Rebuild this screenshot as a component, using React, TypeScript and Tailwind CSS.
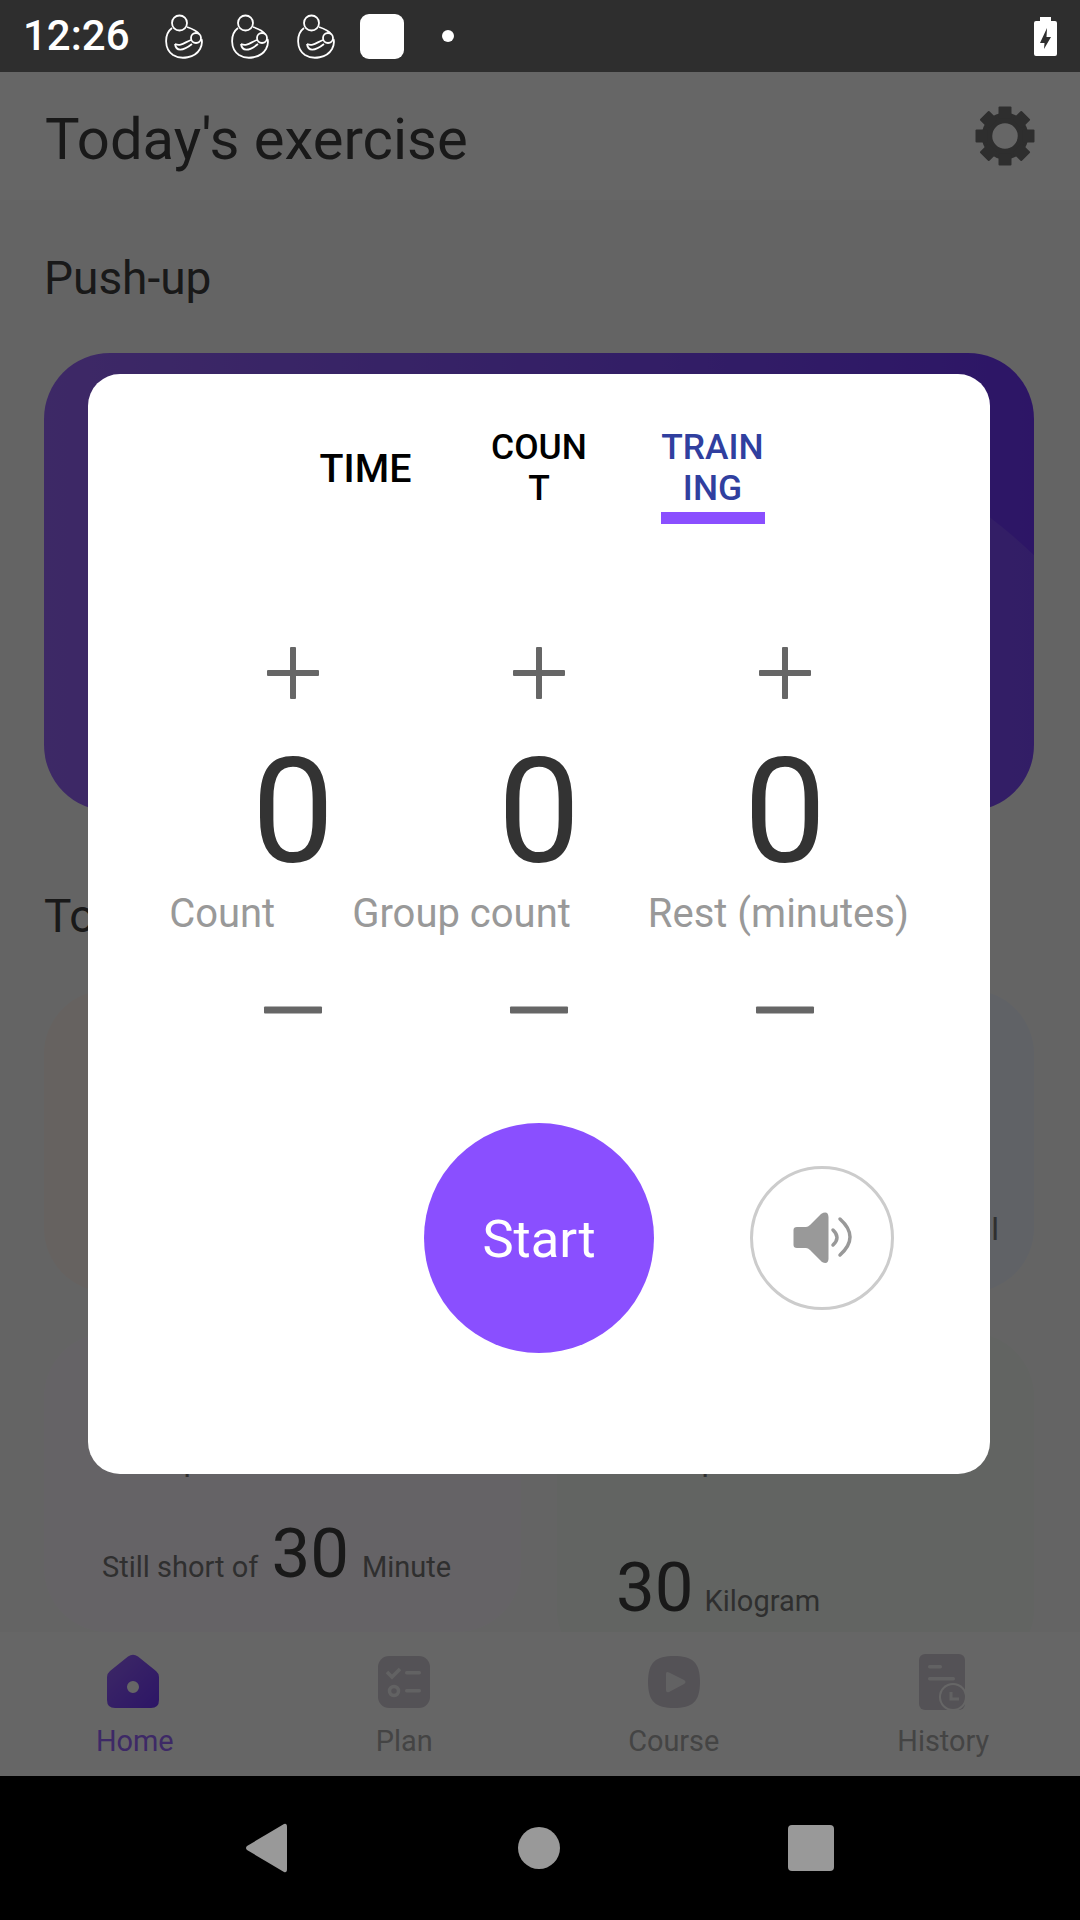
const MotherIcon = () => (
  <svg width="38" height="45" viewBox="0 0 38 45" fill="none" stroke="#fff" strokeWidth="1.8">
    <circle cx="14.5" cy="9" r="7.5" />
    <circle cx="31" cy="24" r="5" />
    <path d="M7 14 C-1 20 -1 35 8 41 C16 46 30 44 35 35 C37 31 37.5 28 36.5 25" />
    <path d="M22 13 C28 15 32 17 34 20" />
    <path d="M10 30 C11 37 17 38 27 30" />
    <path d="M10 30 C16 33 20 28 26 26" />
  </svg>
);

const Gear = () => (
  <svg width="60" height="60" viewBox="0 0 60 60" fill="#737373">
    <circle cx="30" cy="30" r="18" fill="none" stroke="#737373" strokeWidth="10.5" />
    {[0, 45, 90, 135, 180, 225, 270, 315].map((a) => (
      <rect key={a} x="23.5" y="0.5" width="13" height="12" rx="1" transform={`rotate(${a} 30 30)`} />
    ))}
  </svg>
);

const Plus = () => (
  <svg width="54" height="54" viewBox="0 0 54 54" fill="#666">
    <rect x="1" y="24" width="52" height="6" rx="1" />
    <rect x="24" y="1" width="6" height="52" rx="1" />
  </svg>
);

const Minus = () => (
  <svg width="60" height="8" viewBox="0 0 60 8" fill="#666">
    <rect x="1" y="0.5" width="58" height="7" rx="1" />
  </svg>
);

const Speaker = () => (
  <svg className="ml-[2px]" width="60" height="52" viewBox="0 0 60 52" fill="none">
    <path d="M0.5 18 Q0.5 15 4 15 H13 Q15 15 17 13 L28 2 Q35 -2 35.5 5 V47 Q35 53 29 50 L17 38 Q15 36 13 36 H4 Q0.5 36 0.5 33 Z" fill="#999" />
    <path d="M40 18 Q48 25.5 40 33" stroke="#999" strokeWidth="3.5" strokeLinecap="round" />
    <path d="M47 7 Q67 25 47 43" stroke="#999" strokeWidth="3.5" strokeLinecap="round" />
  </svg>
);

const HomeIcon = () => (
  <svg className="-ml-[3px]" width="52" height="54" viewBox="0 0 52 54">
    <defs>
      <linearGradient id="homeGrad" x1="0" y1="0" x2="1" y2="1">
        <stop offset="0" stopColor="#9a66ff" />
        <stop offset="1" stopColor="#7036ff" />
      </linearGradient>
    </defs>
    <path fillRule="evenodd" d="M21 2.5 Q26 -1 31 2.5 L49 17 Q52 19.5 52 23 V46 Q52 54 44 54 H8 Q0 54 0 46 V23 Q0 19.5 3 17 Z M26 27 A6 6 0 1 0 26 39 A6 6 0 1 0 26 27 Z" fill="url(#homeGrad)" />
  </svg>
);

const PlanIcon = () => (
  <svg width="52" height="52" viewBox="0 0 52 52">
    <rect width="52" height="52" rx="11" fill="#d2cdd7" />
    <path d="M9 16 L14 21 L22 13" fill="none" stroke="#fff" strokeWidth="3.5" opacity="0.8" />
    <rect x="27" y="15" width="16" height="3.5" rx="1.7" fill="#fff" opacity="0.8" />
    <circle cx="16" cy="35" r="4.5" fill="none" stroke="#fff" strokeWidth="3.5" opacity="0.8" />
    <rect x="27" y="33" width="16" height="3.5" rx="1.7" fill="#fff" opacity="0.8" />
  </svg>
);

const CourseIcon = () => (
  <svg width="52" height="52" viewBox="0 0 52 52">
    <path d="M26 0 C44 0 52 6 52 26 C52 46 44 52 26 52 C8 52 0 46 0 26 C0 6 8 0 26 0 Z" fill="#d2cdd7" />
    <path d="M18 18 Q18 15 21 16.5 L36 24 Q39 26 36 28 L21 36 Q18 37 18 34 Z" fill="#fff" opacity="0.8" />
  </svg>
);

const HistoryIcon = () => (
  <svg className="-mb-[3px]" width="48" height="57" viewBox="0 0 48 57">
    <rect x="0" y="0" width="46" height="56" rx="6" fill="#d2cdd7" />
    <rect x="9" y="11" width="14" height="3.5" rx="1.7" fill="#fff" opacity="0.8" />
    <rect x="9" y="23" width="27" height="3.5" rx="1.7" fill="#fff" opacity="0.8" />
    <circle cx="34" cy="43" r="14" fill="#fff" />
    <circle cx="34" cy="43" r="12" fill="#d2cdd7" />
    <path d="M32 38 V45 H40" fill="none" stroke="#fff" strokeWidth="3" opacity="0.8" />
  </svg>
);

const tabs = [
  { label: "Home", icon: <HomeIcon />, active: true },
  { label: "Plan", icon: <PlanIcon />, active: false },
  { label: "Course", icon: <CourseIcon />, active: false },
  { label: "History", icon: <HistoryIcon />, active: false },
];

const steppers = ["a", "b", "c"];

export default function App() {
  return (
    <div className="w-[1080px] h-[1920px] flex flex-col overflow-hidden bg-black font-[Roboto,sans-serif]">
      <div className="h-[72px] shrink-0 bg-[#2e2e2e] flex items-center text-white">
        <span className="ml-[23px] w-[142px] text-[42px] font-medium leading-none">12:26</span>
        <div className="flex gap-[28px]">
          <MotherIcon />
          <MotherIcon />
          <MotherIcon />
        </div>
        <div className="ml-[25px] w-[44px] h-[45px] rounded-[9px] bg-white" />
        <div className="ml-[38px] w-[12px] h-[12px] rounded-full bg-white" />
        <svg className="ml-auto mr-[23px]" width="23" height="39" viewBox="0 0 23 39">
          <path fillRule="evenodd" d="M6 0 H17 V4 H21 Q23 4 23 6 V37 Q23 39 21 39 H2 Q0 39 0 37 V6 Q0 4 2 4 H6 Z M13 11 L6 26 H10.5 L10 32 L17 20 H12.5 Z" fill="#fff" />
        </svg>
      </div>

      <div className="relative h-[1704px] shrink-0 flex flex-col bg-[#fafafa] overflow-hidden">
        <div className="h-[128px] shrink-0 bg-white flex items-center justify-between pl-[45px] pr-[45px]">
          <span className="pt-[6px] text-[58px] leading-[64px] text-[#404040]">Today's exercise</span>
          <Gear />
        </div>

        <div className="flex-1 min-h-0 overflow-hidden pl-[44px] pr-[46px]">
          <div className="mt-[53px] h-[50px] text-[46px] leading-[50px] text-[#404040]">Push-up</div>
          <div className="relative mt-[50px] h-[458px] rounded-[66px] overflow-hidden bg-gradient-to-r from-[#9a66ff] to-[#7036ff]">
            <div className="absolute left-[176px] top-[67px] w-[960px] h-[960px] rounded-full bg-white/10" />
          </div>
          <div className="mt-[79px] h-[52px] text-[46px] leading-[52px] text-[#404040]">To</div>
          <div className="mt-[48px] grid grid-cols-2 gap-x-[36px]">
            <div className="flex flex-col gap-[41px]">
              <div className="h-[302px] rounded-[64px] bg-[#fff5f0]" />
              <div className="h-[299px] rounded-[64px] bg-[#fdf8ff] pt-[108px] pl-[93px] text-[#777]">
                <div className="text-[32px] leading-[38px]">Step</div>
                <div className="mt-[35px] -ml-[35px] flex items-baseline whitespace-nowrap">
                  <span className="text-[29px]">Still short of</span>
                  <span className="ml-[13px] text-[69px] leading-[80px] text-[#404040]">30</span>
                  <span className="ml-[13px] text-[29px]">Minute</span>
                </div>
              </div>
            </div>
            <div className="flex flex-col gap-[41px]">
              <div className="h-[302px] rounded-[64px] bg-[#f0f5ff] pt-[220px] pr-[35px] flex justify-end text-[#777]">
                <span className="text-[32px] leading-[38px]">Total</span>
              </div>
              <div className="h-[340px] rounded-[64px] bg-[#f4fbf4] pt-[108px] pl-[98px] text-[#777]">
                <div className="text-[32px] leading-[38px]">Step</div>
                <div className="mt-[69px] -ml-[39px] flex items-baseline whitespace-nowrap">
                  <span className="text-[69px] leading-[80px] text-[#404040]">30</span>
                  <span className="ml-[11px] text-[29px]">Kilogram</span>
                </div>
              </div>
            </div>
          </div>
        </div>

        <div className="h-[144px] shrink-0 bg-white grid grid-cols-4 pr-[2px] relative">
          {tabs.map((t) => (
            <div key={t.label} className="flex flex-col items-center">
              <div className="h-[77px] flex items-end pb-[1px]">{t.icon}</div>
              <span className={`mt-[15px] text-[28.9px] leading-[34px] ${t.active ? "text-[#9a66ff]" : "text-[#aaa]"}`}>{t.label}</span>
            </div>
          ))}
        </div>

        <div className="absolute inset-0 bg-black/60 flex items-center justify-center pr-[2px]">
          <div className="w-[902px] h-[1100px] bg-white rounded-[32px] flex flex-col items-center pt-[53px]">
            <div className="grid grid-cols-[173.5px_173.5px_173.5px] text-[35.4px] leading-[41px] font-medium text-center">
              <div className="h-[98px] flex items-start justify-center">
                <div className="h-[82px] flex items-center text-black text-[39.4px]">TIME</div>
              </div>
              <div className="h-[98px] flex items-start justify-center">
                <div className="text-black">COUN<br />T</div>
              </div>
              <div className="h-[98px] flex flex-col items-center">
                <div className="text-[#303f9f]">TRAIN<br />ING</div>
                <div className="mt-[3px] w-[104px] h-[12px] bg-[#8a4fff]" />
              </div>
            </div>

            <div className="mt-[121px] grid grid-cols-[246px_246px_246px] justify-center">
              {steppers.map((s) => (
                <div key={s} className="flex flex-col items-center">
                  <Plus />
                  <div className="mt-[60px] h-[105px] text-[147px] leading-[105px] text-[#333]">0</div>
                </div>
              ))}
            </div>

            <div className="mt-[26px] flex justify-center gap-[77px] text-[40px] leading-[46px] text-[#999] whitespace-nowrap">
              <span>Count</span>
              <span>Group count</span>
              <span>Rest (minutes)</span>
            </div>

            <div className="mt-[69px] grid grid-cols-[246px_246px_246px] justify-center">
              {steppers.map((s) => (
                <div key={s} className="flex justify-center">
                  <Minus />
                </div>
              ))}
            </div>

            <div className="mt-[109px] w-full grid grid-cols-[1fr_230px_1fr] items-center">
              <div />
              <div className="w-[230px] h-[230px] pt-[3px] rounded-full bg-[#8a4fff] flex items-center justify-center text-white text-[52.5px] leading-none">Start</div>
              <div className="ml-[96px] w-[144px] h-[144px] rounded-full border-[3px] border-[#ccc] flex items-center justify-center">
                <Speaker />
              </div>
            </div>
          </div>
        </div>
      </div>

      <div className="flex-1 relative flex items-center">
        <svg className="ml-[245px]" width="42" height="50" viewBox="0 0 42 50">
          <path d="M39 1 Q42 0 42 4 V46 Q42 50 39 49 L2 27 Q0 25 2 23 Z" fill="#999" />
        </svg>
        <div className="ml-[231px] w-[42px] h-[42px] rounded-full bg-[#999]" />
        <div className="ml-[228px] w-[46px] h-[46px] rounded-[4px] bg-[#999]" />
      </div>
    </div>
  );
}
